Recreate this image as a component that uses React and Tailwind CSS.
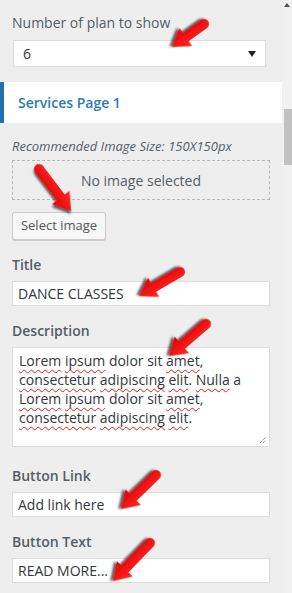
import React from "react";

const arrows = [
  { tail: [204, 24], tip: [172, 47] },
  { tail: [39, 169], tip: [71, 211] },
  { tail: [180, 272], tip: [139, 296] },
  { tail: [206, 324], tip: [169, 356] },
  { tail: [156, 475], tip: [121, 509] },
  { tail: [150, 543], tip: [113, 581] },
];

function Arrow({ tail, tip }) {
  const dx = tip[0] - tail[0];
  const dy = tip[1] - tail[1];
  const len = Math.sqrt(dx * dx + dy * dy);
  const ang = (Math.atan2(dy, dx) * 180) / Math.PI;
  const w = 5;
  const h = 11;
  const hl = 17;
  const d = `M 0 ${-w} L ${len - hl} ${-w} L ${len - hl} ${-h} L ${len} 0 L ${len - hl} ${h} L ${len - hl} ${w} L 0 ${w} A ${w} ${w} 0 0 1 0 ${-w} Z`;
  return (
    <g transform={`translate(${tail[0]} ${tail[1]}) rotate(${ang})`}>
      <path d={d} fill="url(#redgrad)" filter="url(#shadow)" />
    </g>
  );
}

function Label({ children, className = "" }) {
  return (
    <div className={`text-[14px] leading-[20px] font-semibold text-[#555d66] ${className}`}>
      {children}
    </div>
  );
}

function TextBox({ children, className = "" }) {
  return (
    <div
      className={`h-[25px] w-[258px] flex items-center bg-white border border-[#ddd] pl-[5px] text-[14px] text-[#32373c] ${className}`}
    >
      {children}
    </div>
  );
}

function Wavy({ children }) {
  return (
    <span className="underline decoration-wavy decoration-[#e02020] decoration-1 underline-offset-[3px]">
      {children}
    </span>
  );
}

export default function App() {
  return (
    <div
      className="relative w-[292px] h-[593px] overflow-hidden bg-[#eeeeee] flex"
      style={{ fontFamily: '"Open Sans", "Noto Sans", Arial, sans-serif' }}
    >
      <div className="w-[282px] flex flex-col">
        <div className="pl-[12px] pt-[13px]">
          <div className="text-[14px] leading-[20px] text-[#555d66]">Number of plan to show</div>
          <div className="mt-[7px] ml-px w-[253px] h-[27px] bg-white border border-[#ddd] flex items-center justify-between pl-[9px] pr-[9px] text-[14px] text-[#32373c]">
            <span>6</span>
            <svg width="8" height="6" viewBox="0 0 8 6">
              <path d="M0 0 L8 0 L4 6 Z" fill="#222" />
            </svg>
          </div>
        </div>

        <div className="mt-[15px] h-[41px] bg-white border-l-4 border-[#2271b1] flex items-center pl-[14px] text-[14px] font-semibold text-[#2a7ab5]">
          Services Page 1
        </div>

        <div className="pl-[12px]">
          <div className="mt-[14px] text-[13px] leading-[18px] italic text-[#555d66]">
            Recommended Image Size: 150X150px
          </div>
          <div className="mt-[5px] w-[258px] h-[40px] border border-dashed border-[#b4b9be] flex items-center justify-center text-[14px] text-[#555d66]">
            No image selected
          </div>
          <div className="mt-[12px] w-[94px] h-[28px] bg-[#f7f7f7] border border-[#ccc] rounded-[3px] shadow-[0_1px_0_#ccc] flex items-center justify-center text-[13px] text-[#555]">
            Select image
          </div>

          <Label className="mt-[15px]">Title</Label>
          <TextBox className="mt-[6px]">DANCE CLASSES</TextBox>

          <Label className="mt-[15px]">Description</Label>
          <div className="relative mt-[6px] w-[258px] h-[100px] bg-white border border-[#ddd] pl-[6px] pt-[3px] text-[14px] leading-[19px] text-[#32373c]">
            <Wavy>Lorem</Wavy> <Wavy>ipsum</Wavy> dolor sit <Wavy>amet</Wavy>,
            <br />
            <Wavy>consectetur</Wavy> <Wavy>adipiscing</Wavy> <Wavy>elit</Wavy>. <Wavy>Nulla</Wavy> a
            <br />
            <Wavy>Lorem</Wavy> <Wavy>ipsum</Wavy> dolor sit <Wavy>amet</Wavy>,
            <br />
            <Wavy>consectetur</Wavy> <Wavy>adipiscing</Wavy> <Wavy>elit</Wavy>.
            <svg className="absolute right-[2px] bottom-[2px]" width="8" height="8" viewBox="0 0 8 8">
              <path d="M1 7 L7 1 M4 7 L7 4" stroke="#666" strokeWidth="1" strokeDasharray="1 1" />
            </svg>
          </div>

          <Label className="mt-[19px]">Button Link</Label>
          <TextBox className="mt-[6px]">Add link here</TextBox>

          <Label className="mt-[15px]">Button Text</Label>
          <TextBox className="mt-[6px]">READ MORE...</TextBox>
        </div>
      </div>

      <div className="w-[10px] bg-[#f1f1f1] flex flex-col items-end">
        <svg className="mt-[3px] mr-[2px]" width="6" height="4" viewBox="0 0 6 4">
          <path d="M0 4 L3 0 L6 4 Z" fill="#505050" />
        </svg>
        <div className="mt-[102px] w-[8px] h-[56px] bg-[#c1c1c1]" />
      </div>

      <svg className="absolute inset-0 pointer-events-none" width="292" height="593">
        <defs>
          <linearGradient id="redgrad" x1="0" y1="0" x2="0" y2="1">
            <stop offset="0" stopColor="#ff2a2a" />
            <stop offset="1" stopColor="#e00000" />
          </linearGradient>
          <filter id="shadow" x="-30%" y="-30%" width="160%" height="160%">
            <feDropShadow dx="2" dy="2" stdDeviation="1.3" floodColor="#000" floodOpacity="0.65" />
          </filter>
        </defs>
        {arrows.map((a, i) => (
          <Arrow key={i} tail={a.tail} tip={a.tip} />
        ))}
      </svg>
    </div>
  );
}
